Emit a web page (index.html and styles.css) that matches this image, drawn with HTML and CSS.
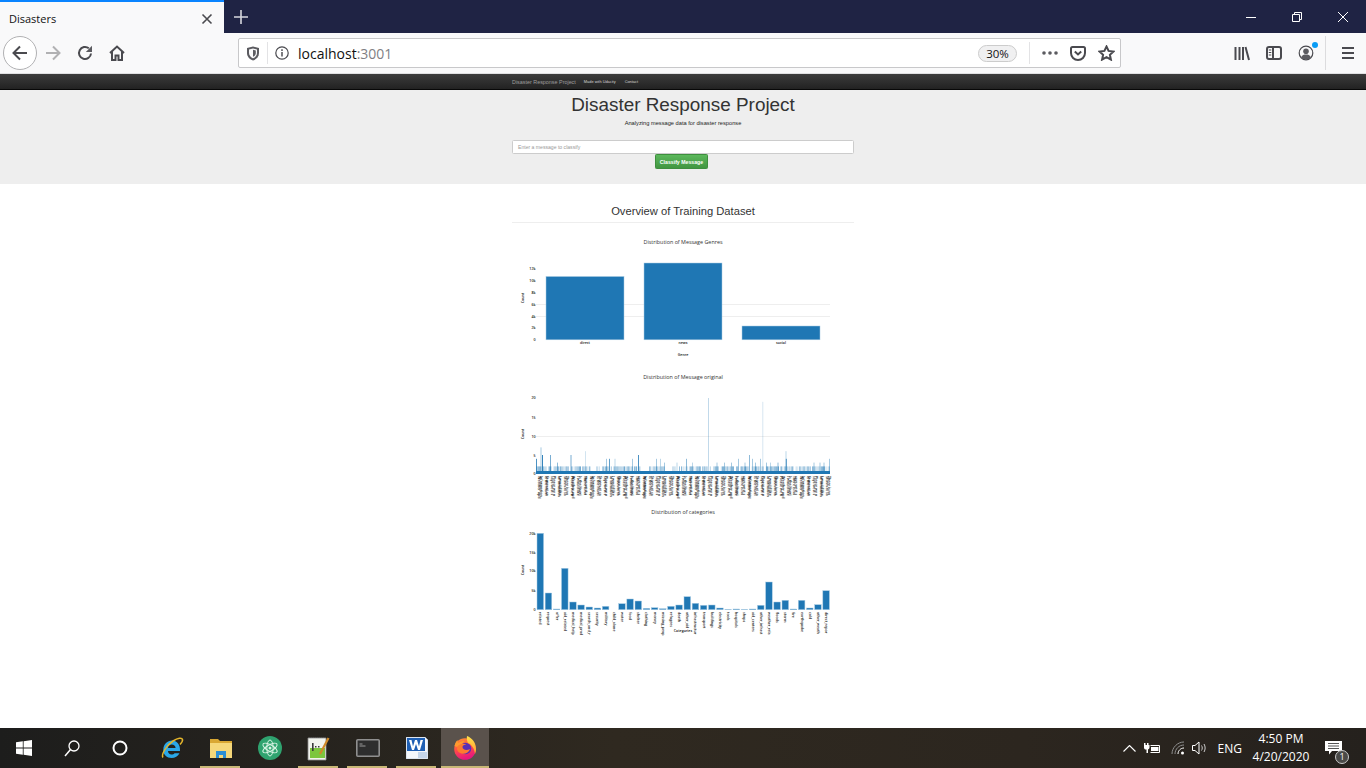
FILE: index.html
```html
<!DOCTYPE html>
<html lang="en">
<head>
    <meta charset="UTF-8">
    <title>Disasters</title>
    <link rel="stylesheet" href="styles.css">
</head>
<body>
    <!-- browser tabs -->
    <div class="tabbar">
        <div class="tab">
            <span class="tab-title">Disasters</span>
            <svg class="tab-close" width="12" height="12" viewBox="0 0 12 12"><path d="M1.5 1.5l9 9M10.5 1.5l-9 9"/></svg>
        </div>
        <svg class="new-tab" width="14" height="14" viewBox="0 0 14 14"><path d="M7 0v14M0 7h14"/></svg>
        <div class="win-buttons">
            <svg width="46" height="12" viewBox="0 0 46 12"><path d="M18 6.5h10"/></svg>
            <svg width="46" height="12" viewBox="0 0 46 12"><path d="M18.5 3.5h7v7h-7zM20.5 3.5v-2h7v7h-2"/></svg>
            <svg width="46" height="12" viewBox="0 0 46 12"><path d="M18 1l10 10M28 1L18 11"/></svg>
        </div>
    </div>

    <!-- browser toolbar -->
    <div class="toolbar">
        <div class="back-btn">
            <svg width="18" height="18" viewBox="0 0 18 18"><path class="ico-line" d="M16 9H2.5M9 2.5L2.5 9 9 15.5"/></svg>
        </div>
        <svg class="tool tool-fwd" width="18" height="18" viewBox="0 0 18 18"><path class="ico-line ico-off" d="M2 9h13.5M9 2.5L15.5 9 9 15.5"/></svg>
        <svg class="tool tool-reload" width="16" height="16" viewBox="0 0 16 16"><path class="ico-line" d="M14 8.5A6 6 0 1 1 11.8 3.3"/><path class="ico-fill" d="M15 .8v6.2H8.8z"/></svg>
        <svg class="tool tool-home" width="16" height="16" viewBox="0 0 16 16"><path class="ico-line" d="M1 8l7-6.5L15 8M3 6.5V15h3.5v-4.5h3V15H13V6.5"/></svg>

        <div class="urlbar">
            <svg class="url-shield" width="14" height="15" viewBox="0 0 14 15"><path class="ico-fill" d="M1 2l6-1.5L13 2v5c0 4-3 6.500-6 7.500C4 13.500 1 11 1 7z"/><path fill="#f9f9fa" d="M3 3.500l4-1 4 1v3.500c0 2.500-2 4.500-4 5.300C5 11.500 3 9.500 3 7z"/><path class="ico-fill" d="M7 3.800l2.800.7v2.700c0 1.500-1.400 3-2.800 3.600z"/></svg>
            <span class="url-sep"></span>
            <svg class="url-info" width="14" height="14" viewBox="0 0 14 14"><circle class="ico-thin" cx="7" cy="7" r="6.200"/><path class="ico-fill" d="M6.200 6h1.600v4.500H6.200zM6.200 3.300h1.600v1.600H6.200z"/></svg>
            <span class="url-text">localhost<span class="url-port">:3001</span></span>
            <span class="zoom-pill">30%</span>
            <span class="url-sep url-sep-right"></span>
            <svg class="url-dots" width="16" height="4" viewBox="0 0 16 4"><circle class="ico-fill" cx="2" cy="2" r="1.800"/><circle class="ico-fill" cx="8" cy="2" r="1.800"/><circle class="ico-fill" cx="14" cy="2" r="1.800"/></svg>
            <svg class="url-pocket" width="16" height="15" viewBox="0 0 16 15"><path class="ico-line" d="M2.500 1h11A1.500 1.500 0 0 1 15 2.500V7a7 7 0 0 1-14 0V2.500A1.500 1.500 0 0 1 2.500 1z"/><path class="ico-line" d="M4.800 5.500L8 8.500l3.200-3"/></svg>
            <svg class="url-star" width="17" height="16" viewBox="0 0 17 16"><path class="ico-line" d="M8.500 1.500l2.100 4.400 4.900.6-3.600 3.300 1 4.800-4.400-2.400-4.400 2.400 1-4.800-3.600-3.300 4.900-.6z"/></svg>
        </div>

        <svg class="tool tool-lib" width="16" height="15" viewBox="0 0 16 15"><path class="ico-line" d="M1.500 1v13M5.500 1v13M9 1v13M11.500 1l3.500 13"/></svg>
        <svg class="tool tool-side" width="16" height="14" viewBox="0 0 16 14"><rect class="ico-line" x="1" y="1" width="14" height="12" rx="2"/><path class="ico-line" d="M7 1v12"/><path class="ico-thin" d="M2.800 4h2.500M2.800 6.500h2.500M2.800 9h2.500"/></svg>
        <div class="account">
            <svg width="16" height="16" viewBox="0 0 16 16"><circle class="ico-thin" cx="8" cy="8" r="6.800"/><circle class="ico-fill" cx="8" cy="6.300" r="2.800"/><path class="ico-fill" d="M3 12.500c1-2.500 3-3 5-3s4 .5 5 3c-1.300 1.300-3 2-5 2s-3.700-.7-5-2z"/></svg>
            <span class="account-dot"></span>
        </div>
        <span class="tool-sep"></span>
        <svg class="tool tool-menu" width="14" height="12" viewBox="0 0 14 12"><path class="ico-line" d="M1 1h12M1 6h12M1 11h12"/></svg>
    </div>

    <!-- the page itself, at 30% zoom -->
    <div class="page">
        <nav class="navbar">
            <div class="wrap nav-row">
                <span class="nav-brand">Disaster Response Project</span>
                <span class="nav-link nav-link-made">Made with Udacity</span>
                <span class="nav-link">Contact</span>
            </div>
        </nav>

        <header class="jumbotron">
            <h1>Disaster Response Project</h1>
            <p class="lead">Analyzing message data for disaster response</p>
            <div class="wrap">
                <div class="msg-input">Enter a message to classify</div>
                <button class="classify-btn">Classify Message</button>
            </div>
        </header>

        <main class="wrap">
            <h2 class="overview">Overview of Training Dataset</h2>
            <div id="charts"></div>
        </main>
    </div>

    <!-- windows taskbar -->
    <div class="taskbar">
        <div class="task-item task-sys">
            <svg width="16" height="16" viewBox="0 0 16 16"><path fill="#fff" d="M0 2.300l6.800-1V7.600H0zM7.600 1.200L16 0v7.600H7.600zM0 8.400h6.800v6.300l-6.800-1zM7.600 8.400H16V16l-8.400-1.200z"/></svg>
        </div>
        <div class="task-item task-sys">
            <svg width="16" height="17" viewBox="0 0 16 17"><circle cx="10" cy="6" r="5" fill="none" stroke="#fff" stroke-width="1.300"/><path d="M6.500 9.500L1 16" stroke="#fff" stroke-width="1.500"/></svg>
        </div>
        <div class="task-item task-sys">
            <svg width="16" height="16" viewBox="0 0 16 16"><circle cx="8" cy="8" r="6.500" fill="none" stroke="#fff" stroke-width="2"/></svg>
        </div>
        <div class="task-gap"></div>
        <div class="task-item">
            <svg width="24" height="24" viewBox="0 0 24 24"><path fill="#2aa7e8" d="M12 4.500c-4.500 0-8.500 3.500-8.700 9C3 19 7 22 11.500 22c3.500 0 6.500-1.700 8-4.800h-5c-.8 1-1.800 1.300-3 1.300-2 0-3.500-1.400-3.500-3.500H20c.6-6-3-10.500-8-10.500zM8 12c.2-2 1.800-3.500 3.800-3.500S15.500 10 15.600 12z"/><path fill="none" stroke="#e5b62c" stroke-width="1.500" d="M3 21.500C1 19 6 9.500 13 5c5-3.200 9-3.500 9.500-1.500.4 1.500-1 3.500-2.500 5"/></svg>
        </div>
        <div class="task-item task-open">
            <svg width="22" height="20" viewBox="0 0 22 20"><path fill="#d9a733" d="M0 1h8l2 2h12v17H0z"/><path fill="#f5d77a" d="M0 5h22v15H0z"/><path fill="#2d8fd5" d="M6 13h10v7h-3v-3H9v3H6z"/></svg>
        </div>
        <div class="task-item">
            <svg width="24" height="24" viewBox="0 0 24 24"><circle cx="12" cy="12" r="12" fill="#2fa36f"/><g fill="none" stroke="#d8f3e4" stroke-width="1"><ellipse cx="12" cy="12" rx="8" ry="3.200" transform="rotate(30 12 12)"/><ellipse cx="12" cy="12" rx="8" ry="3.200" transform="rotate(90 12 12)"/><ellipse cx="12" cy="12" rx="8" ry="3.200" transform="rotate(150 12 12)"/></g><circle cx="12" cy="12" r="1.500" fill="#d8f3e4"/></svg>
        </div>
        <div class="task-item task-open">
            <svg width="24" height="25" viewBox="0 0 24 25"><path fill="#f2f4ee" stroke="#8d8d8d" stroke-width=".8" d="M1 2h18v22H1z"/><path stroke="#555" stroke-width="1" stroke-dasharray="1 1" d="M2 1.500h16"/><path fill="#7cc63f" d="M3 12h15v10H3z"/><path fill="#3a3a3a" d="M5 7h1.600v8H5zM8 10h1.500v1.500H8zM11 10h1.500v1.500H11z"/><path stroke="#d08a2a" stroke-width="2.200" d="M13 18l8.500-16"/></svg>
        </div>
        <div class="task-item task-open">
            <svg width="24" height="18" viewBox="0 0 24 18"><rect x=".8" y=".8" width="22.400" height="16.400" rx="1" fill="#2e2e2e" stroke="#8f8f8f" stroke-width="1.600"/><path stroke="#9a9a9a" stroke-width="1" d="M3.500 5h3M3.500 7h6"/></svg>
        </div>
        <div class="task-item task-open">
            <svg width="22" height="22" viewBox="0 0 22 22"><path fill="#f4f7fb" stroke="#a9bcd4" stroke-width=".6" d="M0 0h19l3 3v19H0z"/><path fill="#1e5fb4" d="M1 1h18v13H1z"/><path fill="#fff" d="M3 3h2.500l1.500 6.500L9 3h2l2 6.500L14.500 3H17l-3 10h-2l-2-6-2 6H6z"/><path fill="#c6d6ea" d="M12 15h9v6h-9z"/></svg>
        </div>
        <div class="task-item task-active">
            <svg width="24" height="24" viewBox="0 0 24 24">
                <defs>
                    <linearGradient id="ff-body" x1="0" y1="0" x2=".3" y2="1">
                        <stop offset="0" stop-color="#ff9a2e"/>
                        <stop offset=".55" stop-color="#ff4a4a"/>
                        <stop offset="1" stop-color="#e8177d"/>
                    </linearGradient>
                    <linearGradient id="ff-top" x1="0" y1="0" x2="0" y2="1">
                        <stop offset="0" stop-color="#ffe14a"/>
                        <stop offset="1" stop-color="#ff9a2e"/>
                    </linearGradient>
                </defs>
                <circle cx="12" cy="13" r="10.800" fill="url(#ff-body)"/>
                <path fill="url(#ff-top)" d="M14 0c5 2 9 6.500 9 13 0 2-.4 3.500-1 5-.5-5-3-9-7-11-1-2-1.500-4.500-1-7z"/>
                <path fill="#ff9a2e" d="M1.500 10C2 7 3.500 5 4.500 4c0 1.500.5 2.500 1 3 2-1.500 4-2 6-2-1 1-1.500 2-1.500 2.500L4 11z"/>
                <circle cx="12.500" cy="12.500" r="5.800" fill="#5a2fb4"/>
                <path fill="#ff7a2e" d="M4.500 10.500c2-2.500 6-3.500 9-2-2.500 0-4 1.200-4 2.500 0 2.500 3.500 4 7.500 2-1 3.500-5 5.500-8.500 4.500S3 13.500 4.500 10.500z"/>
            </svg>
        </div>

        <div class="tray">
            <svg class="tray-caret" width="13" height="7" viewBox="0 0 13 7"><path d="M.5 6.500l6-6 6 6"/></svg>
            <svg class="tray-battery" width="17" height="12" viewBox="0 0 17 12"><path fill="#fff" d="M0 1h1.500v2H3V1h1.500v2H5.500v2.500a2 2 0 0 1-1.500 2V11H2.500V7.500A2 2 0 0 1 0 5.500z"/><path fill="none" stroke="#fff" d="M6.500 3.500h9v7h-9"/><path fill="#fff" d="M7 5h7.500v4H7z"/></svg>
            <svg class="tray-wifi" width="15" height="14" viewBox="0 0 15 14"><g fill="none" stroke="#8f8f8f"><path d="M1 13C1 6.500 6.500 1 13 1"/><path d="M4 13c0-5 4-9 9-9"/><path stroke="#fff" d="M7 13c0-3.300 2.700-6 6-6"/></g><circle cx="11.500" cy="12" r="1.500" fill="#fff"/></svg>
            <svg class="tray-sound" width="16" height="14" viewBox="0 0 16 14"><path fill="none" stroke="#fff" d="M.5 4.500h2.500L7 1v12L3 9.500H.5z"/><path fill="none" stroke="#ccc" d="M9.500 4.500c1 1.500 1 3.500 0 5M12 3c1.500 2.500 1.500 5.500 0 8"/></svg>
            <span class="tray-lang">ENG</span>
            <div class="tray-clock">
                <span>4:50 PM</span>
                <span>4/20/2020</span>
            </div>
            <div class="notify">
                <svg width="17" height="14" viewBox="0 0 17 14"><path fill="#fff" d="M0 0h17v10H7l-3 3.500V10H0z"/><path stroke="#555" d="M3 2.500h11M3 5h11M3 7.500h11"/></svg>
                <span class="notify-badge">1</span>
            </div>
        </div>
    </div>

    <script src="charts.js"></script>
</body>
</html>
```

FILE: styles.css
```css
* {
    box-sizing: border-box;
}

html, body {
    margin: 0;
    padding: 0;
}

body {
    width: 1366px;
    height: 768px;
    overflow: hidden;
    display: flex;
    flex-direction: column;
    font-family: "Liberation Sans", Arial, sans-serif;
    background-color: #fff;
}

/* ---- tab strip ---- */
.tabbar {
    height: 33px;
    flex: none;
    display: flex;
    align-items: center;
    background-color: #1f2344;
}

.tab {
    width: 224px;
    height: 33px;
    display: flex;
    align-items: center;
    justify-content: space-between;
    padding: 2px 11px 0 9px;
    background-color: #f9f9fa;
    border-top: 2px solid #0a84ff;
}

.tab-title {
    font-family: "Open Sans", sans-serif;
    font-size: 11px;
    color: #111;
}

.tab-close path {
    stroke: #4a4a4f;
    stroke-width: 1.6;
    fill: none;
}

.new-tab {
    margin-left: 10px;
}

.new-tab path {
    stroke: #d6d7de;
    stroke-width: 1.600;
    fill: none;
}

.win-buttons {
    margin-left: auto;
    display: flex;
}

.win-buttons svg {
    display: block;
}

.win-buttons path {
    stroke: #fff;
    fill: none;
    stroke-width: 1;
}

/* ---- toolbar ---- */
.toolbar {
    height: 41px;
    flex: none;
    display: flex;
    align-items: center;
    background-color: #f9f9fa;
    border-bottom: 1px solid #e0e0e2;
    padding-left: 3px;
}

.ico-line {
    fill: none;
    stroke: #4a4a4f;
    stroke-width: 2;
}

.ico-off {
    stroke: #b1b1b3;
}

.ico-thin {
    fill: none;
    stroke: #4a4a4f;
    stroke-width: 1.200;
}

.ico-fill {
    fill: #5b5b60;
}

.back-btn {
    width: 34px;
    height: 34px;
    display: flex;
    align-items: center;
    justify-content: center;
    background-color: #fff;
    border: 1px solid #b1b1b3;
    border-radius: 50%;
}

.tool {
    flex: none;
}

.tool-fwd { margin-left: 7px; }
.tool-reload { margin-left: 15px; }
.tool-home { margin-left: 16px; }

.urlbar {
    width: 883px;
    height: 30px;
    margin-left: 113px;
    display: flex;
    align-items: center;
    background-color: #fff;
    border: 1px solid #c8c8ca;
    border-radius: 2px;
}

.url-shield { margin-left: 7px; }

.url-sep {
    width: 1px;
    height: 22px;
    margin-left: 7px;
    background-color: #e3e3e5;
}

.url-info { margin-left: 7px; }

.url-text {
    margin-left: 9px;
    font-family: "Open Sans", sans-serif;
    font-size: 14px;
    color: #111;
}

.url-port {
    color: #808084;
}

.zoom-pill {
    width: 39px;
    height: 17px;
    margin-left: auto;
    text-align: center;
    font-family: "Open Sans", sans-serif;
    font-size: 11.5px;
    line-height: 15px;
    color: #111;
    background-color: #f0f0f1;
    border: 1px solid #ccc;
    border-radius: 9px;
}

.url-sep-right {
    margin-left: 12px;
}

.url-dots { margin-left: 12px; }
.url-pocket { margin-left: 12px; }
.url-star { margin-left: 12px; margin-right: 5px; }

.tool-lib { margin-left: 113px; }
.tool-side { margin-left: 16px; }

.account {
    position: relative;
    width: 16px;
    height: 16px;
    margin-left: 16px;
}

.account svg {
    display: block;
}

.account-dot {
    position: absolute;
    top: -3px;
    right: -4px;
    width: 6px;
    height: 6px;
    border-radius: 50%;
    background-color: #0a9cf5;
}

.tool-sep {
    width: 1px;
    height: 34px;
    margin-left: 11px;
    background-color: #dcdcde;
}

.tool-menu { margin-left: 15px; }

/* ---- the page, 30% zoom ---- */
.page {
    flex: 1;
    min-height: 0;
    overflow: hidden;
}

.wrap {
    width: 342px;
    margin: 0 auto;
}

.navbar {
    height: 16px;
    background-image: linear-gradient(#3c3c3c, #222);
    border-bottom: 1px solid #080808;
}

.nav-row {
    height: 15px;
    display: flex;
    align-items: center;
}

.nav-brand {
    font-size: 5.4px;
    color: #9d9d9d;
}

.nav-link {
    margin-left: 9px;
    font-size: 3.900px;
    color: #d4d4d4;
}

.nav-link-made {
    margin-left: 8px;
}

.jumbotron {
    height: 94px;
    background-color: #eee;
    text-align: center;
    overflow: hidden;
}

.jumbotron h1 {
    margin: 4px 0 0;
    font-size: 18.900px;
    line-height: 21px;
    font-weight: 400;
    color: #333;
}

.lead {
    margin: 5px 0 0;
    font-size: 5.700px;
    line-height: 6px;
    color: #222;
}

.jumbotron .wrap {
    margin-top: 14px;
}

.msg-input {
    height: 14px;
    padding-left: 5px;
    font-size: 5.100px;
    line-height: 12px;
    text-align: left;
    color: #999;
    background-color: #fff;
    border: 1px solid #ccc;
    border-radius: 1.500px;
}

.classify-btn {
    display: block;
    width: 53px;
    height: 15px;
    margin: 0 0 0 143px;
    padding: 0;
    font-family: "Liberation Sans", Arial, sans-serif;
    font-size: 5.200px;
    font-weight: 700;
    color: #fff;
    background-image: linear-gradient(#5cb85c, #419641);
    border: 1px solid #3e8f3e;
    border-radius: 1.200px;
}

.overview {
    margin: 0;
    padding: 21px 0 4px;
    height: 39px;
    text-align: center;
    font-size: 11.200px;
    line-height: 13px;
    font-weight: 400;
    color: #333;
    border-bottom: 1px solid #eee;
}

/* ---- plotly style charts ---- */
.chart {
    display: block;
    width: 342px;
}

.chart text {
    font-family: "Open Sans", "Liberation Sans", sans-serif;
    font-size: 3.600px;
    font-weight: 600;
    fill: #333;
}

.chart .chart-title {
    font-size: 5.400px;
    font-weight: 400;
    fill: #333;
}

.chart .tick-label {
    fill: #111;
}

.grid-line {
    stroke: #eee;
    stroke-width: 1;
}

.bar {
    fill: #1f77b4;
    stroke: #a8cbe3;
    stroke-width: .5;
}

.thin-bar {
    stroke: #1f77b4;
    stroke-width: 1;
}

.base-band {
    fill: #1f77b4;
}

/* ---- taskbar ---- */
.taskbar {
    height: 40px;
    flex: none;
    display: flex;
    align-items: stretch;
    background-image: linear-gradient(90deg, #1d1d1c, #2f2920 45%, #2c261f 75%, #25211d);
    color: #fff;
}

.task-item {
    width: 49px;
    flex: none;
    display: flex;
    align-items: center;
    justify-content: center;
    position: relative;
}

.task-sys {
    width: 48px;
}

.task-gap {
    width: 3px;
    flex: none;
}

.task-open::after {
    content: "";
    position: absolute;
    left: 4px;
    right: 5px;
    bottom: 0;
    height: 2px;
    background-color: #c9b877;
}

.task-active {
    width: 48px;
    background-color: #5a524c;
}

.task-active::after {
    content: "";
    position: absolute;
    left: 0;
    right: 0;
    bottom: 0;
    height: 2px;
    background-color: #c9b877;
}

.tray {
    margin-left: auto;
    display: flex;
    align-items: center;
}

.tray-caret path {
    fill: none;
    stroke: #fff;
    stroke-width: 1.100;
}

.tray-battery { margin-left: 8px; }
.tray-wifi { margin-left: 10px; }
.tray-sound { margin-left: 6px; }

.tray-lang {
    margin-left: 10px;
    font-family: "Open Sans", sans-serif;
    font-size: 12px;
}

.tray-clock {
    width: 60px;
    margin-left: 9px;
    display: flex;
    flex-direction: column;
    align-items: center;
    font-family: "Open Sans", sans-serif;
    font-size: 12px;
    line-height: 18px;
}

.notify {
    position: relative;
    width: 17px;
    height: 14px;
    margin-left: 14px;
    margin-right: 24px;
}

.notify svg {
    display: block;
}

.notify-badge {
    position: absolute;
    right: -7px;
    bottom: -9px;
    width: 14px;
    height: 14px;
    font-family: "Open Sans", sans-serif;
    font-size: 9px;
    line-height: 12px;
    text-align: center;
    color: #fff;
    background-color: #4a4a48;
    border: 1px solid #ccc;
    border-radius: 50%;
}
```

FILE: charts.js
```js
// charts are drawn in page coordinates, left edge of the wrap is 512
var SVG_NS = 'http://www.w3.org/2000/svg';
var LEFT = 512;

function el(name, attrs, text) {
    var node = document.createElementNS(SVG_NS, name);
    for (var key in attrs) {
        node.setAttribute(key, attrs[key]);
    }
    if (text) {
        node.textContent = text;
    }
    return node;
}

function newChart(top, height, title, titleY) {
    var svg = el('svg', { 'class': 'chart', height: height, viewBox: LEFT + ' ' + top + ' 342 ' + height });
    svg.appendChild(el('text', { 'class': 'chart-title', x: 683, y: titleY, 'text-anchor': 'middle' }, title));
    document.getElementById('charts').appendChild(svg);
    return svg;
}

function yTicks(svg, ticks, countY) {
    ticks.forEach(function (t) {
        svg.appendChild(el('text', { 'class': 'tick-label', x: 535.5, y: t[1] + 1.3, 'text-anchor': 'end' }, t[0]));
    });
    svg.appendChild(el('text', {
        'class': 'tick-label',
        x: 524,
        y: countY,
        'text-anchor': 'middle',
        transform: 'rotate(-90 524 ' + countY + ')'
    }, 'Count'));
}

function gridLine(svg, y) {
    svg.appendChild(el('line', { 'class': 'grid-line', x1: 536, x2: 830, y1: y, y2: y }));
}

function bar(svg, x, w, top, base) {
    svg.appendChild(el('rect', { 'class': 'bar', x: x, y: top, width: w, height: base - top }));
}

// vertical labels that run top to bottom
function downLabels(svg, items, y) {
    items.forEach(function (item) {
        svg.appendChild(el('text', {
            'class': 'tick-label',
            x: item[0],
            y: y,
            transform: 'rotate(90 ' + item[0] + ' ' + y + ')'
        }, item[1]));
    });
}

// Distribution of Message Genres
function genreChart() {
    var svg = newChart(223, 143, 'Distribution of Message Genres', 244);
    gridLine(svg, 304.5);
    gridLine(svg, 316.5);
    yTicks(svg, [['12k', 269], ['10k', 280.6], ['8k', 292.6], ['6k', 304.3], ['4k', 316.3], ['2k', 327.8], ['0', 339.5]], 298);
    bar(svg, 546, 78, 276.5, 339.8);
    bar(svg, 644, 78, 263, 339.8);
    bar(svg, 742, 78, 326, 339.8);
    [['direct', 585], ['news', 683], ['social', 781]].forEach(function (l) {
        svg.appendChild(el('text', { 'class': 'tick-label', x: l[1], y: 343.5, 'text-anchor': 'middle' }, l[0]));
    });
    svg.appendChild(el('text', { 'class': 'tick-label', x: 683, y: 355.5, 'text-anchor': 'middle' }, 'Genre'));
}

// Distribution of Message original
function originalChart() {
    var svg = newChart(366, 136, 'Distribution of Message original', 379);
    var base = 474;
    var unit = 3.8;
    gridLine(svg, 436.5);
    yTicks(svg, [['20', 397.5], ['15', 417.5], ['10', 436.5], ['5', 455.5], ['0', 474]], 434);

    // level two bars, skipping the few gaps in the reference
    var seed = 7;
    for (var x = 536.5; x < 830; x += 1.1) {
        seed = (seed * 137 + 59) % 1009;
        var gap = (x > 591 && x < 596) || (x > 642 && x < 649) || (x > 666 && x < 671);
        if (!gap && seed % 5 !== 0) {
            svg.appendChild(el('line', {
                'class': 'thin-bar', x1: x, x2: x, y1: base - 2 * unit, y2: base,
                'stroke-opacity': 0.2 + (seed % 7) * 0.07
            }));
        }
    }

    // the taller ones: x, count, opacity, width
    [[536.5, 4, .8, 1], [541, 7, .4, 1.5], [542.5, 5, .9, 1], [550.5, 5, .6, 1], [557.5, 3, .5, 1], [571, 5, .6, 1],
     [585.5, 6, .2, 2], [606.5, 4, .4, 1], [609.5, 4, .7, 1], [615, 4, .3, 1.5], [632.5, 4, .4, 1], [638.5, 5, .8, 1],
     [656.5, 4, .4, 1], [660.5, 4, .3, 1], [664.5, 3, .4, 1], [677, 3, .3, 1.5], [686.5, 4, .5, 1], [692.5, 3, .3, 1.5],
     [708.5, 20, .28, 2], [717, 3, .4, 1], [724.5, 3, .4, 1], [731.5, 3, .4, 1], [738.5, 4, .4, 1], [745, 3, .4, 1],
     [749.5, 5, .5, 1], [752.5, 4, .4, 1], [755.5, 3, .4, 1], [760.5, 4, .4, 1], [762.8, 19, .18, 2], [766.5, 3, .4, 1],
     [770.5, 3, .3, 1.5], [778, 3, .5, 1], [786, 6, .3, 1.5], [786.3, 4, .8, 1], [814, 3, .4, 1], [820, 3, .4, 1],
     [824, 3, .4, 1], [829.5, 4, .4, 1]].forEach(function (b) {
        svg.appendChild(el('line', {
            'class': 'thin-bar', x1: b[0], x2: b[0], y1: base - b[1] * unit, y2: base,
            'stroke-opacity': b[2], 'stroke-width': b[3]
        }));
    });
    svg.appendChild(el('rect', { 'class': 'base-band', x: 536, y: 471, width: 294, height: 3 }));

    var words = ['Weather upd', 'Is the Hurri', 'says west s', 'Information', 'Storm at sa',
        'Please we n', 'I would like', 'There is no'];
    var items = [];
    for (var i = 0; i < 45; i++) {
        items.push([538 + i * 6.55, words[i % words.length]]);
        items.push([539.6 + i * 6.55, words[(i + 3) % words.length]]);
    }
    downLabels(svg, items, 476);
}

// Distribution of categories
function categoryChart() {
    var svg = newChart(502, 135, 'Distribution of categories', 514);
    var base = 609.7;
    var cats = [['related', 533.3], ['request', 593], ['offer', 609], ['aid_related', 568.3], ['medical_help', 602],
        ['medical_prod', 605], ['search_and_r', 607], ['security', 608], ['military', 606.3], ['child_alone', 609.7],
        ['water', 603.7], ['food', 599], ['shelter', 601], ['clothing', 608.3], ['money', 607.7], ['missing_peop', 608.7],
        ['refugees', 606.3], ['death', 605], ['other_aid', 596.7], ['infrastructur', 603.3], ['transport', 605.3],
        ['buildings', 605], ['electricity', 608], ['tools', 609.3], ['hospitals', 609], ['shops', 609.3], ['aid_centers', 609],
        ['other_infrast', 605.3], ['weather_rela', 582], ['floods', 602], ['storm', 600.3], ['fire', 609],
        ['earthquake', 600.3], ['cold', 608], ['other_weath', 604.7], ['direct_repor', 590.7]];
    var step = 294 / 36;
    var labels = [];
    yTicks(svg, [['20k', 533.3], ['15k', 552.3], ['10k', 571], ['5k', 590.3], ['0', 609.7]], 570);
    cats.forEach(function (c, i) {
        var x = 536.7 + i * step;
        bar(svg, x + 0.3, step - 1.6, c[1], base);
        labels.push([x + step / 2 - 1.6, c[0]]);
    });
    downLabels(svg, labels, 612);
    svg.appendChild(el('text', { 'class': 'tick-label', x: 683, y: 631.5, 'text-anchor': 'middle' }, 'Categories'));
}

genreChart();
originalChart();
categoryChart();
```
